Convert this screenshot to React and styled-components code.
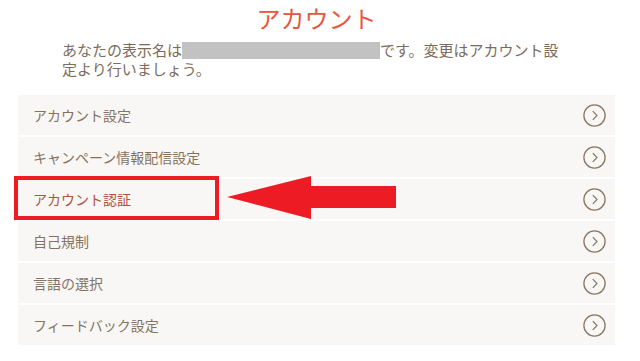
import React from "react";
import styled, { createGlobalStyle } from "styled-components";

const Global = createGlobalStyle`
  html, body { margin: 0; padding: 0; background: #ffffff; }
  body { font-family: "Noto Sans CJK JP", "Noto Sans", sans-serif; }
`;

const Page = styled.div`
  width: 640px;
  height: 361px;
  padding: 0 25px 0 18px;
  box-sizing: border-box;
  display: flex;
  flex-direction: column;
`;

const Title = styled.h1`
  margin: 0;
  height: 36px;
  line-height: 36px;
  font-size: 24px;
  font-weight: 400;
  color: #ea5441;
  text-align: center;
`;

const Intro = styled.p`
  margin: 4px 44px 17px 44px;
  font-size: 15px;
  line-height: 19px;
  color: #7d6c5c;
`;

const Masked = styled.span`
  display: inline-block;
  width: 198px;
  height: 17px;
  background: #c2c2c2;
  vertical-align: -3px;
`;

const List = styled.ul`
  position: relative;
  margin: 0;
  padding: 0;
  list-style: none;
  display: flex;
  flex-direction: column;
  gap: 2px;
`;

const Row = styled.li`
  position: relative;
  height: 40px;
  padding: 0 9px 0 15px;
  background: #f8f7f5;
  display: flex;
  align-items: center;
  justify-content: space-between;
  font-size: 14px;
  color: ${(p) => (p.$active ? "#b3503f" : "#85735f")};
`;

const Highlight = styled.div`
  position: absolute;
  left: -4px;
  top: -3px;
  width: 205px;
  height: 44px;
  box-sizing: border-box;
  border: 4px solid #ed1c24;
  pointer-events: none;
`;

const Arrow = styled.svg`
  position: absolute;
  left: 209px;
  top: 80px;
  width: 170px;
  height: 45px;
`;

const Chevron = () => (
  <svg width="23" height="23" viewBox="0 0 23 23">
    <circle cx="11.5" cy="11.5" r="10.6" fill="none" stroke="#8b7662" strokeWidth="1.3" />
    <path d="M9.8 7.2 L14 11.5 L9.8 15.8" fill="none" stroke="#8b7662" strokeWidth="1.2" />
  </svg>
);

const items = [
  "アカウント設定",
  "キャンペーン情報配信設定",
  "アカウント認証",
  "自己規制",
  "言語の選択",
  "フィードバック設定",
];

export default function App() {
  return (
    <>
      <Global />
      <Page>
        <Title>アカウント</Title>
        <Intro>
          あなたの表示名は<Masked />です。変更はアカウント設定より行いましょう。
        </Intro>
        <List>
          {items.map((label, i) => (
            <Row key={label} $active={i === 2}>
              <span>{label}</span>
              <Chevron />
              {i === 2 && <Highlight />}
            </Row>
          ))}
          <Arrow viewBox="0 0 170 45">
            <polygon points="0,22 84,1 84,11 169,11 169,33 84,33 84,44" fill="#ed1c24" />
          </Arrow>
        </List>
      </Page>
    </>
  );
}
